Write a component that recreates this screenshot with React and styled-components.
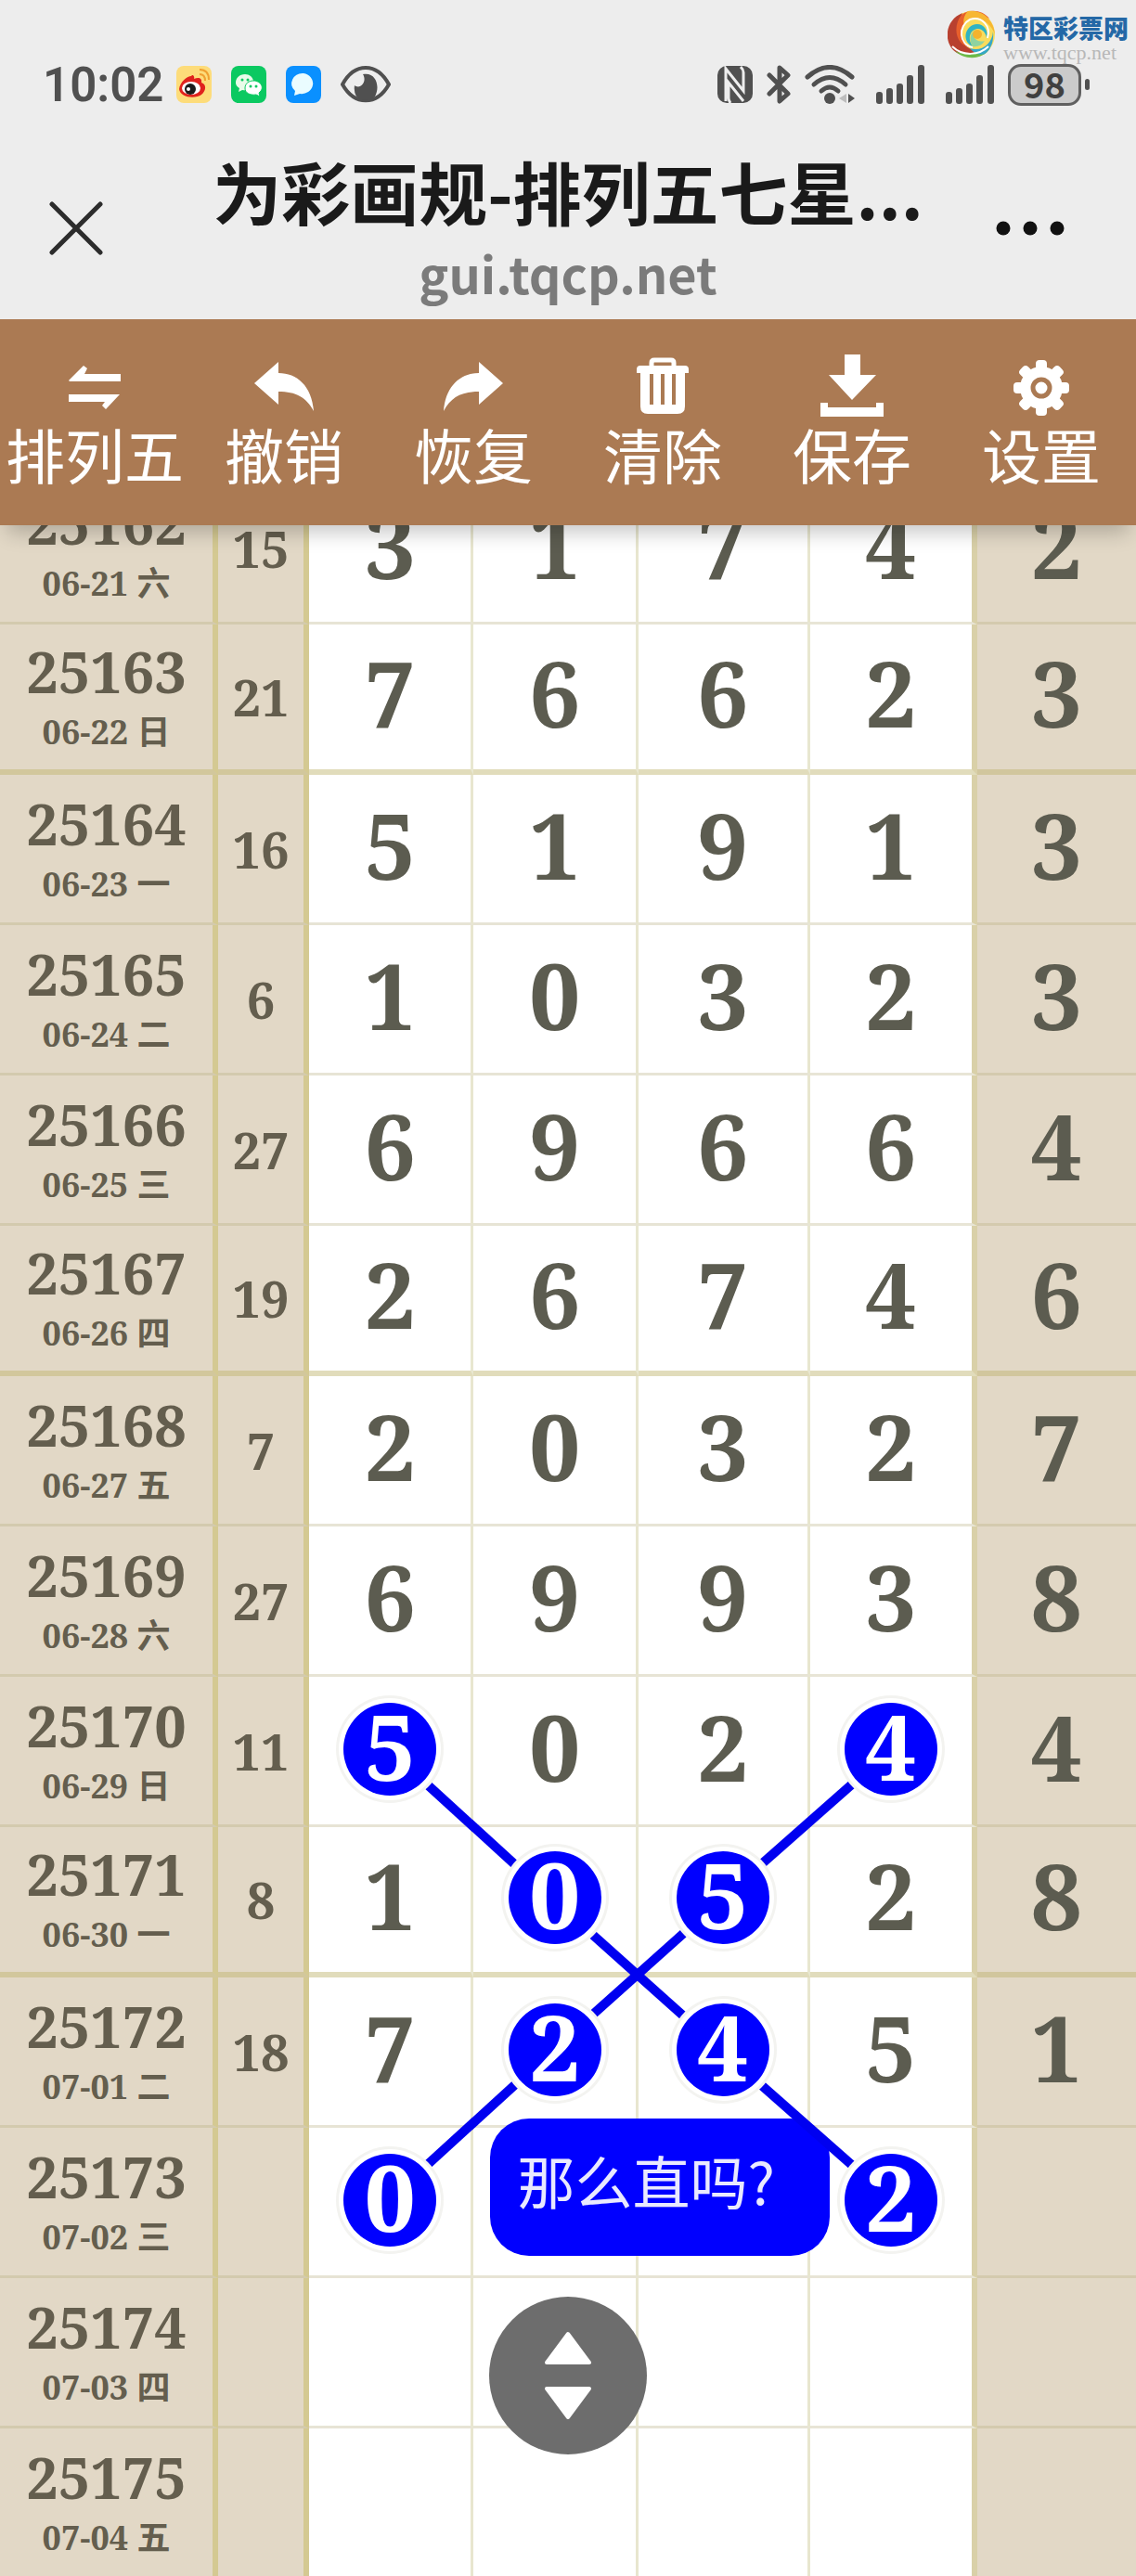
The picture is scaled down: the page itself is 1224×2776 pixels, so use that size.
import React from 'react';
import styled, { createGlobalStyle, css } from 'styled-components';

const GlobalStyle = createGlobalStyle`
  * {
    box-sizing: border-box;
  }
  body {
    margin: 0;
    background-color: #ededed;
    font-family: 'Noto Sans CJK SC', 'Noto Sans', sans-serif;
  }
`;

const Page = styled.div`
  position: relative;
  display: flex;
  flex-direction: column;
  height: 100vh;
  overflow: hidden;
`;

const StatusBar = styled.div`
  display: flex;
  justify-content: space-between;
  align-items: center;
  flex-shrink: 0;
  padding: 62px 50px 0 46px;
  height: 120px;
  color: #505050;
`;

const StatusGroup = styled.div`
  display: flex;
  align-items: center;
  gap: ${({ $gap }) => $gap}px;
`;

const Clock = styled.time`
  padding-top: 2px;
  font-family: Roboto, sans-serif;
  font-size: 51px;
  font-weight: 600;
  line-height: 58px;
`;

const Battery = styled.div`
  display: flex;
  align-items: center;
  gap: 4px;
  &::after {
    content: '';
    width: 5px;
    height: 12px;
    border-radius: 3px;
    background-color: #505050;
  }
`;

const BatteryLevel = styled.span`
  width: 79px;
  height: 45px;
  border: 3px solid #606060;
  border-radius: 14px;
  background-color: #cbcbcb;
  color: #404040;
  font-size: 38px;
  font-weight: 700;
  line-height: 36px;
  text-align: center;
`;

const Watermark = styled.a`
  position: absolute;
  top: 8px;
  right: 8px;
  display: flex;
  align-items: center;
  gap: 8px;
  color: #2468a6;
  text-decoration: none;
`;

const WatermarkText = styled.span`
  display: flex;
  flex-direction: column;
  padding-top: 4px;
  font-size: 27px;
  font-weight: 900;
  line-height: 36px;
`;

const WatermarkUrl = styled.span`
  font-family: 'Liberation Serif', serif;
  font-size: 22px;
  font-weight: 400;
  line-height: 18px;
  color: #b8b8b8;
`;

const NavBar = styled.header`
  display: grid;
  grid-template-columns: 164px 1fr 164px;
  align-items: center;
  flex-shrink: 0;
  height: 224px;
`;

const IconButton = styled.button`
  display: flex;
  justify-content: ${({ $align }) => $align || 'center'};
  padding: 28px 0 0;
  border: 0;
  background: none;
`;

const Heading = styled.div`
  display: flex;
  flex-direction: column;
  align-items: center;
  min-width: 0;
  padding-top: 28px;
`;

const Title = styled.h1`
  margin: 0;
  font-size: 74px;
  font-weight: 700;
  line-height: 96px;
  color: #1a1a1a;
  white-space: nowrap;
`;

const Host = styled.span`
  font-size: 54px;
  font-weight: 700;
  line-height: 82px;
  color: #7b7b7b;
`;

const Toolbar = styled.nav`
  z-index: 5;
  display: grid;
  grid-template-columns: repeat(6, 1fr);
  flex-shrink: 0;
  height: 222px;
  padding-top: 36px;
  background-color: #ab7a53;
  box-shadow: 0 16px 20px -8px rgba(0, 0, 0, 0.22);
`;

const Tool = styled.button`
  display: flex;
  flex-direction: column;
  align-items: center;
  padding: 0;
  border: 0;
  background: none;
  color: #fff;
  font-family: inherit;
  font-size: 64px;
  line-height: 64px;
  white-space: nowrap;
  svg {
    display: block;
    flex-shrink: 0;
  }
`;

const Board = styled.main`
  position: relative;
  flex: 1;
  min-height: 0;
  overflow: hidden;
  background-color: #fff;
`;

// the list is scrolled a little way under the toolbar
const Sheet = styled.div`
  position: relative;
  margin-top: -55px;
`;

const Table = styled.table`
  width: 100%;
  table-layout: fixed;
  border-collapse: separate;
  border-spacing: 0;
  font-family: 'Noto Serif', 'Liberation Serif', 'Noto Sans CJK SC', serif;
  font-weight: 700;
  color: #5c5c50;
  text-align: center;
`;

const Row = styled.tr`
  height: 162px;
  th,
  td {
    border-bottom: ${({ $thick }) => ($thick ? '6px solid rgba(189, 178, 106, 0.45)' : '3px solid rgba(178, 170, 120, 0.3)')};
  }
`;

const beige = css`
  background-color: #e2d8c6;
  background-clip: border-box;
`;

const Issue = styled.th`
  ${beige}
  padding: 2px 0 0;
  border-right: 6px solid rgba(200, 188, 95, 0.5);
  color: #645e4e;
`;

const IssueNo = styled.div`
  font-size: 61px;
  line-height: 66px;
`;

const IssueDate = styled.div`
  margin-top: 8px;
  font-size: 36px;
  line-height: 48px;
`;

const Sum = styled.td`
  ${beige}
  padding: 0;
  border-right: 6px solid rgba(200, 188, 95, 0.5);
  font-size: 54px;
  line-height: 66px;
  color: #645e4e;
`;

const Digit = styled.td`
  padding: 0 0 10px;
  border-right: ${({ $last }) => ($last ? '6px solid #d9d0a8' : '3px solid rgba(190, 185, 120, 0.35)')};
  font-size: 98px;
  line-height: 104px;
`;

const Tail = styled(Digit)`
  ${beige}
  border-right: 0;
`;

const Ball = styled.span`
  position: relative;
  z-index: 2;
  display: block;
  width: 100px;
  height: 100px;
  margin: 6px auto 0;
  border-radius: 50%;
  background-color: #0000ff;
  box-shadow: 0 0 0 5px #fff, 0 0 0 8px #f3f3f0;
  color: #fff;
  line-height: 92px;
`;

const Lines = styled.svg`
  position: absolute;
  inset: 0;
  z-index: 1;
  width: 100%;
  height: 100%;
  pointer-events: none;
`;

const Note = styled.div`
  position: absolute;
  top: 1772px;
  left: 43.1%;
  width: 366px;
  height: 148px;
  padding: 22px 30px;
  border-radius: 42px;
  background-color: #0000ff;
  color: #e9e9ff;
  font-size: 62px;
  line-height: 88px;
  white-space: nowrap;
`;

const ScrollButton = styled.button`
  position: absolute;
  left: 50%;
  bottom: 131px;
  z-index: 3;
  display: flex;
  align-items: center;
  justify-content: center;
  width: 170px;
  height: 170px;
  margin-left: -85px;
  padding: 0;
  border: 0;
  border-radius: 50%;
  background-color: #6d6d6d;
`;

const rows = [
  { no: '25162', date: '06-21 六', sum: 15, digits: '31742' },
  { no: '25163', date: '06-22 日', sum: 21, digits: '76623', thick: true },
  { no: '25164', date: '06-23 一', sum: 16, digits: '51913' },
  { no: '25165', date: '06-24 二', sum: 6, digits: '10323' },
  { no: '25166', date: '06-25 三', sum: 27, digits: '69664' },
  { no: '25167', date: '06-26 四', sum: 19, digits: '26746', thick: true },
  { no: '25168', date: '06-27 五', sum: 7, digits: '20327' },
  { no: '25169', date: '06-28 六', sum: 27, digits: '69938' },
  { no: '25170', date: '06-29 日', sum: 11, digits: '50244', marked: [0, 3] },
  { no: '25171', date: '06-30 一', sum: 8, digits: '10528', marked: [1, 2], thick: true },
  { no: '25172', date: '07-01 二', sum: 18, digits: '72451', marked: [1, 2] },
  { no: '25173', date: '07-02 三', digits: '0  2 ', marked: [0, 3] },
  { no: '25174', date: '07-03 四', digits: '     ' },
  { no: '25175', date: '07-04 五', digits: '     ' },
];

const columns = ['19.2%', '8%', '14.5%', '14.5%', '15.1%', '14.7%', '14%'];

const centers = ['34.2%', '48.7%', '63.5%', '78.5%'];

// [from column, to column, from row, to row]
const segments = [
  [0, 1, 8, 9],
  [1, 2, 9, 10],
  [2, 3, 10, 11],
  [3, 2, 8, 9],
  [2, 1, 9, 10],
  [1, 0, 10, 11],
];

const rowCenter = (index) => index * 162 + 78;

const SwapIcon = () => (
  <svg width="56" height="76" viewBox="0 0 56 76" fill="#fff" aria-hidden="true">
    <path d="M0 30 L16 14 L20 17 L17 23 H56 V31 H1 Z" />
    <path d="M0 45 H55 L40 61 L36 57 L39 53 H0 Z" />
  </svg>
);

const ReplyIcon = ({ flip }) => (
  <svg width="64" height="76" viewBox="0 0 64 76" fill="#fff" aria-hidden="true">
    <path
      transform={flip ? 'translate(64 0) scale(-1 1)' : undefined}
      d="M0 33 L26 10 V22 C46 22 62 36 64 63 C56 48 45 42 26 42 V56 Z"
    />
  </svg>
);

const TrashIcon = () => (
  <svg width="56" height="76" viewBox="0 0 56 76" aria-hidden="true">
    <path fill="none" stroke="#fff" strokeWidth="5" d="M16 16 V11 Q16 8 19 8 H37 Q40 8 40 11 V16" />
    <path fill="#fff" d="M4 14 H52 Q56 14 56 18 V22 H52 V58 Q52 66 44 66 H12 Q4 66 4 58 V22 H0 V18 Q0 14 4 14 Z" />
    <path stroke="#ab7a53" strokeWidth="4" d="M16 23 V56 M28 23 V56 M40 23 V56" />
  </svg>
);

const SaveIcon = () => (
  <svg width="68" height="76" viewBox="0 0 68 76" fill="#fff" aria-hidden="true">
    <path d="M26 2 H43 V24 H60 L34 51 L9 24 H26 Z" />
    <path d="M0 54 H8 V59 H60 V54 H68 V69 H0 Z" />
  </svg>
);

const GearIcon = () => (
  <svg width="60" height="76" viewBox="0 0 60 76" aria-hidden="true">
    <circle cx="30" cy="38" r="23" fill="#fff" />
    <g fill="#fff">
      {[0, 45, 90, 135].map((angle) => (
        <rect key={angle} x="24" y="8" width="12" height="60" rx="4" transform={`rotate(${angle} 30 38)`} />
      ))}
    </g>
    <circle cx="30" cy="38" r="9" fill="none" stroke="#ab7a53" strokeWidth="5" />
  </svg>
);

const tools = [
  { label: '排列五', icon: <SwapIcon /> },
  { label: '撤销', icon: <ReplyIcon /> },
  { label: '恢复', icon: <ReplyIcon flip /> },
  { label: '清除', icon: <TrashIcon /> },
  { label: '保存', icon: <SaveIcon /> },
  { label: '设置', icon: <GearIcon /> },
];

const WeiboIcon = () => (
  <svg width="38" height="40" viewBox="0 0 38 40" aria-hidden="true">
    <rect width="38" height="40" rx="8" fill="#fddc7a" />
    <path fill="#e0221d" d="M3 25 C4 17 12 11 16 11 C18 8 20 12 19 14 C24 12 28 13 27 18 C33 20 32 27 27 31 C20 36 4 34 3 25 Z" />
    <ellipse cx="16" cy="24" rx="10" ry="7" fill="#fff" />
    <circle cx="15" cy="25" r="6" fill="#1c1c1c" />
    <circle cx="13" cy="25" r="2" fill="#fff" />
    <path fill="none" stroke="#f0a030" strokeWidth="2" d="M25 9 Q31 9 31 16 M25 4 Q35 4 35 15" />
  </svg>
);

const WeChatIcon = () => (
  <svg width="38" height="40" viewBox="0 0 38 40" aria-hidden="true">
    <rect width="38" height="40" rx="8" fill="#0bc961" />
    <path fill="#e9fbe9" d="M15 9 C9 9 5 13 5 18 C5 21 7 23 9 24 L8 28 L12 26 C22 28 25 21 24 16 C23 12 20 9 15 9 Z" />
    <path fill="#fff" stroke="#0bc961" d="M24 16 C19 16 15 19 15 24 C15 29 20 32 27 31 L31 33 L30 29 C37 24 32 16 24 16 Z" />
    <path stroke="#0bc961" strokeWidth="3" strokeLinecap="round" d="M12 15 V15.1 M18 15 V15.1 M21 22 V22.1 M27 22 V22.1" />
  </svg>
);

const MessageIcon = () => (
  <svg width="38" height="40" viewBox="0 0 38 40" aria-hidden="true">
    <rect width="38" height="40" rx="8" fill="#0a90ff" />
    <path fill="#eafcff" d="M19 8 A12 11 0 1 1 15 30 L9 32 L10 27 A12 11 0 0 1 19 8 Z" />
  </svg>
);

const EyeIcon = () => (
  <svg width="54" height="40" viewBox="0 0 54 40" aria-hidden="true">
    <path fill="none" stroke="#505050" strokeWidth="4" d="M2 20 C15 -4 39 -4 52 20 C39 43 15 43 2 20 Z" />
    <path fill="#505050" d="M24 9 C38 6 43 22 37 33 Q27 41 17 33 Q14 28 15 21 C21 26 29 17 24 9 Z" />
  </svg>
);

const NfcIcon = () => (
  <svg width="38" height="40" viewBox="0 0 38 40" aria-hidden="true">
    <rect width="38" height="40" rx="10" fill="#505050" />
    <path fill="none" stroke="#ededed" strokeWidth="3" d="M9 38 V3 L28 27 V7 Q28 4 25 1 M28 38 L12 18 V35 Q12 37 14 40" />
  </svg>
);

const BluetoothIcon = () => (
  <svg width="26" height="42" viewBox="0 0 26 42" aria-hidden="true">
    <path fill="none" stroke="#505050" strokeWidth="5" strokeLinejoin="round" strokeLinecap="round" d="M3 11 L23 31 L14 39 V3 L23 11 L3 31" />
  </svg>
);

const WifiIcon = () => (
  <svg width="54" height="42" viewBox="0 0 54 42" aria-hidden="true">
    <g fill="none" stroke="#505050" strokeWidth="5" strokeLinecap="round">
      <path d="M3 13 Q27 -8 51 13" />
      <path d="M10 21 Q27 6 44 21" />
      <path d="M18 28 Q27 20 36 28" />
    </g>
    <circle cx="27" cy="36" r="6" fill="#505050" />
    <path fill="#bdbdbd" d="M45 31 V41 L37 36 Z" />
    <path fill="#505050" d="M47 31 V41 L54 36 Z" />
  </svg>
);

const SignalIcon = () => (
  <svg width="52" height="42" viewBox="0 0 52 42" fill="#505050" aria-hidden="true">
    <rect x="0" y="29" width="7" height="13" rx="3" />
    <rect x="11" y="25" width="7" height="17" rx="3" />
    <rect x="22" y="20" width="7" height="22" rx="3" />
    <rect x="33" y="11" width="7" height="31" rx="3" />
    <rect x="45" y="0" width="7" height="42" rx="3" />
  </svg>
);

const LogoIcon = () => (
  <svg width="52" height="54" viewBox="0 0 52 54" aria-hidden="true">
    <circle cx="26" cy="27" r="25" fill="#f9dc5c" />
    <path fill="#b8402f" d="M16 4 C-4 12 -5 38 10 47 C20 52 28 48 32 44 C16 44 6 26 16 4 Z" />
    <path fill="#e8602c" d="M15 6 C24 -1 38 1 45 10 C34 5 23 8 18 16 C13 25 16 37 26 41 C10 41 4 20 15 6 Z" />
    <path fill="#f7b733" d="M22 2 C38 0 50 12 51 27 C47 16 38 9 27 11 C22 12 19 15 18 18 C16 12 18 6 22 2 Z" />
    <path fill="#6cba4a" d="M8 45 C20 56 38 54 46 42 C36 47 20 50 8 45 Z" />
    <path fill="#35a7c8" d="M24 42 C36 46 48 38 49 24 C50 34 47 43 40 48 C34 50 28 47 24 42 Z" />
    <path fill="#2fb3c4" d="M27 40 C17 36 17 22 27 17 C37 13 45 22 42 31 C41 24 35 19 29 22 C23 25 22 33 27 40 Z" />
    <path fill="#8fd3a0" d="M27 40 C22 32 25 24 31 22 C25 28 30 37 40 34 C37 39 32 41 27 40 Z" />
    <path fill="none" stroke="#fff" strokeWidth="2" d="M5 40 C16 51 34 50 44 40 M27 41 C12 38 11 18 24 11 C37 7 47 18 43 31" />
    <circle cx="32" cy="27" r="5" fill="#f5b32e" />
  </svg>
);

function StatusIcons() {
  return (
    <StatusBar>
      <StatusGroup $gap={14}>
        <Clock>10:02</Clock>
        <StatusGroup $gap={21}>
          <WeiboIcon />
          <WeChatIcon />
          <MessageIcon />
          <EyeIcon />
        </StatusGroup>
      </StatusGroup>
      <StatusGroup $gap={23}>
        <StatusGroup $gap={15}>
          <NfcIcon />
          <BluetoothIcon />
          <WifiIcon />
        </StatusGroup>
        <SignalIcon />
        <StatusGroup $gap={15}>
          <SignalIcon />
          <Battery>
            <BatteryLevel>98</BatteryLevel>
          </Battery>
        </StatusGroup>
      </StatusGroup>
    </StatusBar>
  );
}

function ResultRow({ no, date, sum, digits, marked = [], thick }) {
  return (
    <Row $thick={thick}>
      <Issue scope="row">
        <IssueNo>{no}</IssueNo>
        <IssueDate>{date}</IssueDate>
      </Issue>
      <Sum>{sum}</Sum>
      {[0, 1, 2, 3].map((i) => (
        <Digit key={i} $last={i === 3}>
          {marked.includes(i) ? <Ball>{digits[i]}</Ball> : digits[i].trim()}
        </Digit>
      ))}
      <Tail>{digits[4].trim()}</Tail>
    </Row>
  );
}

export default function App() {
  return (
    <Page>
      <GlobalStyle />
      <StatusIcons />
      <Watermark href="#">
        <LogoIcon />
        <WatermarkText>
          特区彩票网
          <WatermarkUrl>www.tqcp.net</WatermarkUrl>
        </WatermarkText>
      </Watermark>
      <NavBar>
        <IconButton aria-label="关闭">
          <svg width="58" height="58" viewBox="0 0 58 58" aria-hidden="true">
            <path stroke="#2c2c2c" strokeWidth="5" strokeLinecap="round" d="M3 3 L55 55 M55 3 L3 55" />
          </svg>
        </IconButton>
        <Heading>
          <Title>为彩画规-排列五七星...</Title>
          <Host>gui.tqcp.net</Host>
        </Heading>
        <IconButton aria-label="更多" $align="flex-start">
          <svg width="102" height="58" viewBox="0 0 102 58" fill="#111" aria-hidden="true">
            <circle cx="21" cy="29" r="7.5" />
            <circle cx="50" cy="29" r="7.5" />
            <circle cx="79" cy="29" r="7.5" />
          </svg>
        </IconButton>
      </NavBar>
      <Toolbar>
        {tools.map(({ label, icon }) => (
          <Tool key={label}>
            {icon}
            {label}
          </Tool>
        ))}
      </Toolbar>
      <Board>
        <Sheet>
          <Table>
            <colgroup>
              {columns.map((width, i) => (
                <col key={i} style={{ width }} />
              ))}
            </colgroup>
            <tbody>
              {rows.map((row) => (
                <ResultRow key={row.no} {...row} />
              ))}
            </tbody>
          </Table>
          <Note>那么直吗?</Note>
          <Lines aria-hidden="true">
            {segments.map(([c1, c2, r1, r2]) => (
              <line
                key={`${c1}${r1}`}
                x1={centers[c1]}
                y1={rowCenter(r1)}
                x2={centers[c2]}
                y2={rowCenter(r2)}
                stroke="#0000f0"
                strokeWidth="10"
              />
            ))}
          </Lines>
        </Sheet>
        <ScrollButton aria-label="滚动">
          <svg width="50" height="96" viewBox="0 0 50 96" fill="#fff" stroke="#fff" strokeWidth="4" strokeLinejoin="round" aria-hidden="true">
            <path d="M25 3 L48 34 H2 Z" />
            <path d="M25 93 L48 62 H2 Z" />
          </svg>
        </ScrollButton>
      </Board>
    </Page>
  );
}
